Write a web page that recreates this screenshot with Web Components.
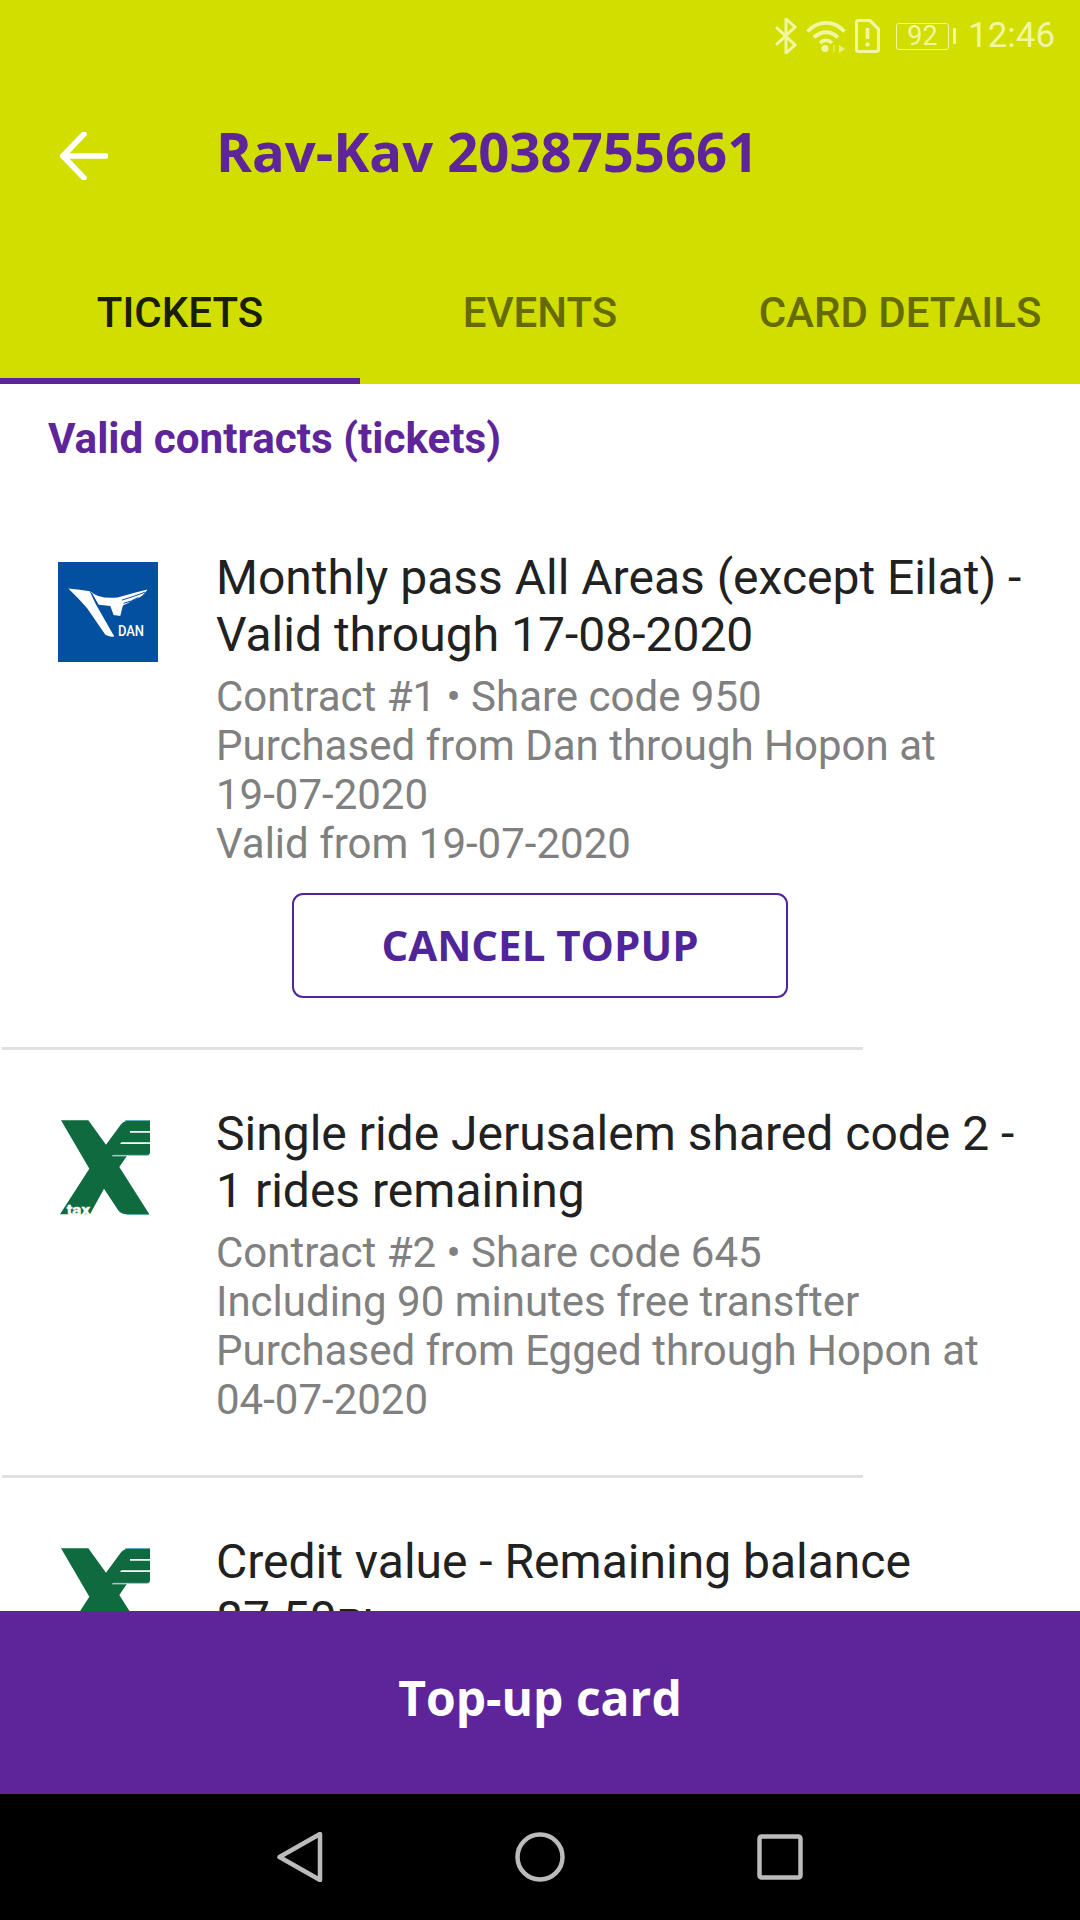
<!DOCTYPE html>
<html><head><meta charset="utf-8">
<style>
html,body{margin:0;padding:0;background:#fff}
body{width:1080px;height:1920px;font-family:Roboto,sans-serif;overflow:hidden}
x-app{display:flex;flex-direction:column;height:1920px}
.nb{white-space:nowrap}
</style></head>
<body>
<x-app>
  <x-header>
    <x-status-bar></x-status-bar>
    <x-app-bar title="Rav-Kav 2038755661"></x-app-bar>
    <x-tabs>
      <x-tab active>TICKETS</x-tab>
      <x-tab>EVENTS</x-tab>
      <x-tab>CARD DETAILS</x-tab>
    </x-tabs>
  </x-header>
  <x-content>
    <x-section-title>Valid contracts (tickets)</x-section-title>
    <x-ticket heading="Monthly pass All Areas (except Eilat) - Valid through 17-08-2020">
      <x-dan-logo slot="logo"></x-dan-logo>
      <div>Contract #1 • Share code 950</div>
      <div>Purchased from Dan through Hopon at <span class="nb">19-07-2020</span></div>
      <div>Valid from 19-07-2020</div>
      <x-outline-button slot="action">CANCEL TOPUP</x-outline-button>
    </x-ticket>
    <x-ticket heading="Single ride Jerusalem shared code 2 - 1 rides remaining">
      <x-egged-logo slot="logo"></x-egged-logo>
      <div>Contract #2 • Share code 645</div>
      <div>Including 90 minutes free transfter</div>
      <div>Purchased from Egged through Hopon at <span class="nb">04-07-2020</span></div>
    </x-ticket>
    <x-ticket heading="Credit value - Remaining balance 87.50₪" last>
      <x-egged-logo slot="logo"></x-egged-logo>
    </x-ticket>
  </x-content>
  <x-cta>Top-up card</x-cta>
  <x-nav-bar></x-nav-bar>
</x-app>
<script>
const def=(name,html,init)=>customElements.define(name,class extends HTMLElement{
  constructor(){super();this.attachShadow({mode:'open'}).innerHTML=html;}
  connectedCallback(){if(init)init(this);}
});
def('x-header',`<style>:host{display:block;background:#d1de00;flex:none}</style><slot></slot>`);
def('x-status-bar',`<style>
:host{display:flex;height:72px;align-items:center;justify-content:flex-end;padding-right:25px;box-sizing:border-box;color:#f1f6a2}
svg{display:block;flex:none}
.time{font:400 35px/72px Roboto,sans-serif;margin-left:12px;width:87px;white-space:nowrap}
.bat{position:relative;display:flex;align-items:center;margin-left:16px}
.cell{width:53px;height:27px;box-sizing:border-box;border:1.5px solid currentColor;border-radius:3px;font:400 27px/24px Roboto,sans-serif;text-align:center}
.tip{width:3.500px;height:16px;background:currentColor;margin-left:3.500px;border-radius:1px}
</style>
<svg width="22" height="36" viewBox="0 0 22 36" fill="none" stroke="currentColor" stroke-width="3"><path d="M1 9l19 18-9 8V1l9 8L1 27"/></svg>
<svg style="margin-left:9px" width="40" height="33" viewBox="0 0 40 33" fill="none" stroke="currentColor" stroke-width="3.800"><path d="M1.500 11.500C12 0 28 0 38.500 11.500"/><path d="M8 17.500c7-7 17-7 24 0"/><path d="M14 23c3.500-3.500 8.500-3.500 12 0"/><circle cx="19" cy="28.500" r="3.600" fill="currentColor" stroke="none"/><path d="M28 25v7" stroke-width="1.500" opacity=".6"/><path d="M33 25l6 4-6 4z" fill="currentColor" stroke="none" opacity=".8"/></svg>
<svg style="margin-left:9px" width="25" height="34" viewBox="0 0 25 34" fill="none" stroke="currentColor" stroke-width="3.200"><path d="M3.500 1.500H15l8.500 8.500v20.500a2 2 0 0 1-2 2h-18a2 2 0 0 1-2-2v-27a2 2 0 0 1 2-2z"/><path d="M12.500 9v11" stroke-width="3.800"/><circle cx="12.500" cy="25.500" r="2.300" fill="currentColor" stroke="none"/></svg>
<div class="bat"><div class="cell">92</div><div class="tip"></div></div>
<div class="time">12:46</div>`);
def('x-app-bar',`<style>
:host{display:flex;height:168px;align-items:center}
.back{width:216px;flex:none;padding-left:60px;box-sizing:border-box;display:flex}
h1{margin:0 0 9px;font:700 54.4px/1.2 "Open Sans",sans-serif;color:#5e259b}
</style>
<div class="back"><svg width="48" height="48" viewBox="0 0 48 48" fill="none" stroke="#fff" stroke-width="5.500" stroke-linecap="round" stroke-linejoin="round"><path d="M46 24H3"/><path d="M24 2L3 24l21 22"/></svg></div>
<h1></h1>`,el=>{el.shadowRoot.querySelector('h1').textContent=el.getAttribute('title');el.removeAttribute('title');el.setAttribute('aria-label','app bar')});
def('x-tabs',`<style>:host{display:flex;height:144px}::slotted(*){flex:1}</style><slot></slot>`);
def('x-tab',`<style>
:host{display:flex;align-items:center;justify-content:center;box-sizing:border-box;font:500 42px/1 Roboto,sans-serif;color:#656b00;border-bottom:6px solid transparent;padding-top:8px;white-space:nowrap}
:host([active]){color:#1b1d00;border-bottom-color:#5e259b}
</style><slot></slot>`);
def('x-content',`<style>:host{display:block;flex:1;min-height:0;overflow:hidden;background:#fff}</style><slot></slot>`);
def('x-section-title',`<style>:host{display:block;padding:30px 48px 0;font:700 42.2px/50px Roboto,sans-serif;color:#5e259b;height:165px;box-sizing:border-box}</style><slot></slot>`);
def('x-ticket',`<style>
:host{display:block;font-family:Roboto,sans-serif}
.row{display:flex;padding:0 48px 0 57px}
.logo{width:102px;flex:none;margin-right:57px;padding-top:12px}
.body{flex:1;min-width:0}
h2{margin:0;font:400 48px/57px Roboto,sans-serif;color:#212121}
.sub{margin-top:8.500px;font:400 42px/49px Roboto,sans-serif;color:#808080}
.action{display:flex;justify-content:center;padding-top:25px}
.rule{height:3px;width:861px;margin:51.500px 0 55px 2px;background:#e1e1e1}
</style>
<div class="row"><div class="logo"><slot name="logo"></slot></div>
<div class="body"><h2></h2><div class="sub"><slot></slot></div></div></div>
<div class="action"><slot name="action"></slot></div>
<div class="rule"></div>`,el=>{el.shadowRoot.querySelector('h2').textContent=el.getAttribute('heading');
 if(el.querySelector('[slot=action]')){el.shadowRoot.querySelector('.rule').style.marginTop='49.5px'}
 else el.shadowRoot.querySelector('.action').style.display='none';});
def('x-outline-button',`<style>
:host{display:flex;align-items:center;justify-content:center;width:496px;height:105px;box-sizing:border-box;border:2.5px solid #51259a;border-radius:11px;font:700 42px/1 "Open Sans",sans-serif;color:#51259a}
</style><slot></slot>`);
def('x-dan-logo',`<style>:host{display:block;width:100px;height:100px;margin:1px 0 0 1px}svg{display:block}</style>
<svg width="100" height="100" viewBox="82 65 302 302"><rect x="82" y="65" width="302" height="302" fill="#0450a0"/>
<path fill="#fff" d="M113 145Q150 148 178 153L195 190L252 290Q235 292 225 285L170 205Q145 175 113 145Z"/>
<path fill="#fff" d="M180 153Q205 178 262 172Q310 158 352 148Q340 170 310 180Q295 190 278 196L270 228L250 225L240 198L205 194Z"/>
<path fill="none" stroke="#0450a0" stroke-width="3" d="M183 158L201 193M275 180Q310 170 345 156M280 190Q305 184 325 172"/>
<text x="263" y="289" font-family="Roboto,sans-serif" font-weight="500" font-size="44" fill="#fff" textLength="79" lengthAdjust="spacingAndGlyphs">DAN</text></svg>`);
def('x-egged-logo',`<style>:host{display:block;width:102px;height:102px}svg{display:block}</style>
<svg width="102" height="102" viewBox="81 55 306 306">
<path fill="#0f6a3f" d="M93 65H175L228 138L272 78Q282 66 295 66H360V160Q360 170 350 170H292L268 205L358 347H290Q274 347 264 334L222 270L180 347H90L178 210Z"/>
<path fill="#fff" d="M300 97H362V102H300ZM274 131H362V136H270ZM248 170H295V173H246Z"/>
<path fill="#3f9db5" d="M285 65H360V67H285ZM250 168H358V170H250ZM290 346H358V348H290Z"/>
<text x="110" y="349" font-family="Roboto,sans-serif" font-weight="700" font-size="46" fill="#fff" stroke="#fff" stroke-width="1.500" textLength="70" lengthAdjust="spacingAndGlyphs">tax</text></svg>`);
def('x-cta',`<style>:host{display:flex;flex:none;position:relative;height:183px;padding-bottom:10px;box-sizing:border-box;align-items:center;justify-content:center;background:#5e259b;color:#fff;font:700 48px/1 "Open Sans",sans-serif}</style><slot></slot>`);
def('x-nav-bar',`<style>:host{display:flex;flex:none;height:126px;background:#000;align-items:center;justify-content:center;gap:190px}svg{display:block}</style>
<svg width="50" height="50" viewBox="0 0 50 50" fill="none" stroke="#bbb" stroke-width="4.500" stroke-linejoin="round"><path d="M4.500 25L45 2v46z"/></svg>
<svg width="50" height="50" viewBox="0 0 50 50" fill="none" stroke="#bbb" stroke-width="4.500"><circle cx="25" cy="25" r="22.500"/></svg>
<svg width="50" height="50" viewBox="0 0 50 50" fill="none" stroke="#bbb" stroke-width="4.500" stroke-linejoin="round"><rect x="4.500" y="4.500" width="41" height="41" rx="2"/></svg>`);
</script>
</body></html>
